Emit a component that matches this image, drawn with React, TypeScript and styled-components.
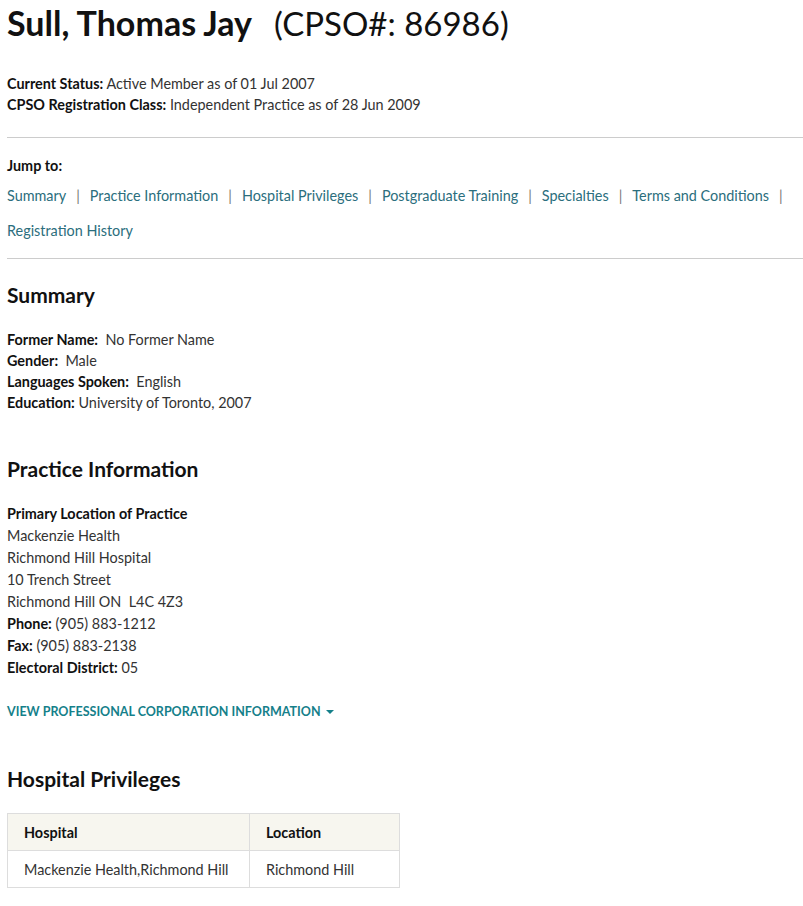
import React from 'react';
import styled, { createGlobalStyle } from 'styled-components';

const GlobalStyle = createGlobalStyle`
  body {
    margin: 0;
    background: #ffffff;
    font-family: Lato, "Noto Sans", sans-serif;
    color: #222;
  }
`;

const Page = styled.div`
  padding: 0 0 20px 7px;
  font-size: 14.4px;
`;

const Title = styled.h1`
  margin: 0;
  padding-top: 2px;
  font-size: 34px;
  line-height: 42px;
  font-weight: 700;
  color: #111;
`;

const CpsoNo = styled.span`
  font-weight: 400;
  font-size: 33px;
  margin-left: 22px;
`;

const StatusBlock = styled.div`
  margin-top: 29px;
  margin-bottom: 22px;
`;

const Line = styled.div<{ $h?: number }>`
  line-height: ${(p) => p.$h ?? 21}px;
  color: #333;
`;

const Label = styled.b`
  font-weight: 700;
  color: #111;
`;

const Rule = styled.hr`
  margin: 0;
  border: 0;
  border-top: 1px solid #cccccc;
`;

const JumpSection = styled.div`
  padding: 18px 0 10px;
`;

const JumpTitle = styled.div`
  font-weight: 700;
  color: #111;
  line-height: 20px;
  margin-bottom: 2px;
`;

const JumpLinks = styled.div`
  display: flex;
  flex-wrap: wrap;
  line-height: 35px;
`;

const JumpLink = styled.a`
  color: #2b6e7d;
  text-decoration: none;
  cursor: pointer;
`;

const Sep = styled.span`
  color: #777777;
  margin: 0 10px;
`;

const SectionTitle = styled.h2`
  margin: 0;
  font-size: 21px;
  line-height: 28px;
  font-weight: 700;
  color: #111;
`;

const Section = styled.section<{ $top: number }>`
  padding-top: ${(p) => p.$top}px;
`;

const Details = styled.div`
  margin-top: 20px;
`;

const ToggleLink = styled.a`
  display: inline-flex;
  align-items: center;
  gap: 5px;
  margin-top: 23px;
  font-size: 12.5px;
  font-weight: 700;
  color: #15808a;
  text-transform: uppercase;
  text-decoration: none;
  line-height: 20px;
`;

const Caret = styled.span`
  width: 0;
  height: 0;
  border-left: 4px solid transparent;
  border-right: 4px solid transparent;
  border-top: 4px solid #15808a;
`;

const Table = styled.table`
  margin-top: 20px;
  border-collapse: collapse;
  table-layout: fixed;
  width: 393px;
`;

const Th = styled.th<{ $w?: number }>`
  box-sizing: border-box;
  text-align: left;
  background: #f7f6ef;
  border: 1px solid #dddddd;
  padding: 0 16px;
  height: 37px;
  font-weight: 700;
  color: #111;
  width: ${(p) => (p.$w ? `${p.$w}px` : 'auto')};
`;

const Td = styled.td`
  border: 1px solid #dddddd;
  padding: 0 16px;
  height: 36px;
  color: #333;
  white-space: nowrap;
`;

const jumpItems = [
  'Summary',
  'Practice Information',
  'Hospital Privileges',
  'Postgraduate Training',
  'Specialties',
  'Terms and Conditions',
];

export default function App() {
  return (
    <Page>
      <GlobalStyle />
      <Title>
        Sull, Thomas Jay<CpsoNo>(CPSO#: 86986)</CpsoNo>
      </Title>

      <StatusBlock>
        <Line>
          <Label>Current Status:</Label> Active Member as of 01 Jul 2007
        </Line>
        <Line>
          <Label>CPSO Registration Class:</Label> Independent Practice as of 28 Jun 2009
        </Line>
      </StatusBlock>

      <Rule />

      <JumpSection>
        <JumpTitle>Jump to:</JumpTitle>
        <JumpLinks>
          {jumpItems.map((item) => (
            <span key={item}>
              <JumpLink>{item}</JumpLink>
              <Sep>|</Sep>
            </span>
          ))}
          <JumpLink>Registration History</JumpLink>
        </JumpLinks>
      </JumpSection>

      <Rule />

      <Section $top={22}>
        <SectionTitle>Summary</SectionTitle>
        <Details>
          <Line>
            <Label>Former Name:</Label>&nbsp; No Former Name
          </Line>
          <Line>
            <Label>Gender:</Label>&nbsp; Male
          </Line>
          <Line>
            <Label>Languages Spoken:</Label>&nbsp; English
          </Line>
          <Line>
            <Label>Education:</Label> University of Toronto, 2007
          </Line>
        </Details>
      </Section>

      <Section $top={42}>
        <SectionTitle>Practice Information</SectionTitle>
        <Details>
          <Line $h={22}>
            <Label>Primary Location of Practice</Label>
          </Line>
          <Line $h={22}>Mackenzie Health</Line>
          <Line $h={22}>Richmond Hill Hospital</Line>
          <Line $h={22}>10 Trench Street</Line>
          <Line $h={22}>Richmond Hill ON&nbsp; L4C 4Z3</Line>
          <Line $h={22}>
            <Label>Phone:</Label> (905) 883-1212
          </Line>
          <Line $h={22}>
            <Label>Fax:</Label> (905) 883-2138
          </Line>
          <Line $h={22}>
            <Label>Electoral District:</Label> 05
          </Line>
        </Details>
        <ToggleLink>
          View Professional Corporation Information
          <Caret />
        </ToggleLink>
      </Section>

      <Section $top={43}>
        <SectionTitle>Hospital Privileges</SectionTitle>
        <Table>
          <thead>
            <tr>
              <Th $w={242}>Hospital</Th>
              <Th>Location</Th>
            </tr>
          </thead>
          <tbody>
            <tr>
              <Td>Mackenzie Health,Richmond Hill</Td>
              <Td>Richmond Hill</Td>
            </tr>
          </tbody>
        </Table>
      </Section>
    </Page>
  );
}
